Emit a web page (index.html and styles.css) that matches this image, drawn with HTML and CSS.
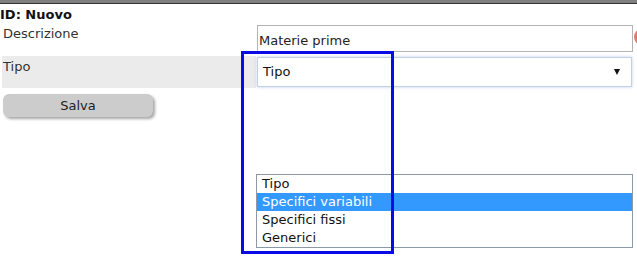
FILE: index.html
```html
<!DOCTYPE html>
<html lang="it">
  <head>
    <meta charset="UTF-8" />
    <title>ID: Nuovo</title>
    <link rel="stylesheet" href="styles.css">
  </head>
  <body>
    <div class="topbar"></div>
    <h1 class="record-id">ID: Nuovo</h1>

    <div class="form-row">
      <label class="field-label">Descrizione</label>
      <div class="field">
        <input type="text" class="text-input" value="Materie prime" />
        <span class="err-dot"></span>
      </div>
    </div>

    <div class="form-row">
      <label class="field-label alt">Tipo</label>
      <div class="field">
        <div class="select-box">
          <span>Tipo</span>
          <span class="arrow"></span>
        </div>
        <!-- open dropdown list -->
        <ul class="select-list">
          <li>Tipo</li>
          <li class="selected">Specifici variabili</li>
          <li>Specifici fissi</li>
          <li>Generici</li>
        </ul>
      </div>
    </div>

    <button class="btn">Salva</button>

    <div class="mark-box"></div>
  </body>
</html>
```

FILE: styles.css
```css
html {
  height: 100%;
}
body {
  margin: 0;
  height: 100%;
  overflow: hidden;
  font-family: "DejaVu Sans", Verdana, sans-serif;
  font-size: 13px;
  line-height: 16px;
  color: #222;
  background: #fff;
  position: relative;
}
.topbar {
  height: 3px;
  background: #7f7f7f;
  border-bottom: 1px solid #333;
}
.record-id {
  margin: 3px 0 0 0;
  font-size: 13px;
  line-height: 16px;
  font-weight: bold;
  color: #111;
}
.form-row {
  display: grid;
  grid-template-columns: 254px 1fr;
  padding-left: 2px;
}
.field-label {
  padding: 3px 0 0 1px;
  color: #333;
}
.field-label.alt {
  background: #ebebeb;
  height: 29px;
}
.field {
  display: flex;
  align-items: flex-start;
  position: relative;
  padding: 2px 0 4px 0;
}
.form-row + .form-row .field {
  padding: 1px 0 1px 0;
}
.text-input {
  box-sizing: border-box;
  margin: 0 0 0 1px;
  width: 376px;
  height: 27px;
  padding: 4px 1px 0 1px;
  border: 1px solid #b4b4b4;
  font-family: inherit;
  font-size: 13px;
  color: #222;
  outline: none;
}
.err-dot {
  width: 16px;
  height: 16px;
  margin: 4px 0 0 1px;
  border-radius: 50%;
  background: #e07b6b;
  flex: none;
}
.select-box {
  box-sizing: border-box;
  margin-left: 1px;
  width: 375px;
  height: 30px;
  padding: 0 11px 0 5px;
  display: flex;
  align-items: center;
  justify-content: space-between;
  border: 1px solid #c3d0e6;
  box-shadow: 0 0 3px rgba(120, 150, 210, 0.45);
  background: #fff;
  color: #111;
}
.arrow {
  width: 0;
  height: 0;
  border-left: 3px solid transparent;
  border-right: 3px solid transparent;
  border-top: 6px solid #111;
}
.select-list {
  position: absolute;
  top: 118px;
  left: 0;
  width: 375px;
  margin: 0;
  padding: 0;
  list-style: none;
  border: 1px solid #8d99a6;
  background: #fff;
}
.select-list li {
  height: 18px;
  line-height: 18px;
  padding-left: 5px;
  color: #111;
}
.select-list li.selected {
  background: #3399ff;
  color: #fff;
}
.btn {
  display: block;
  margin: 6px 0 0 3px;
  width: 150px;
  height: 23px;
  border: none;
  border-radius: 6px;
  background: #cccccc;
  box-shadow: 2px 2px 3px rgba(0, 0, 0, 0.35);
  font-family: inherit;
  font-size: 13px;
  color: #222;
  padding: 0;
}
.mark-box {
  position: absolute;
  left: 241px;
  top: 51px;
  width: 153px;
  height: 203px;
  box-sizing: border-box;
  border: 3px solid #0a0ae6;
}
```
